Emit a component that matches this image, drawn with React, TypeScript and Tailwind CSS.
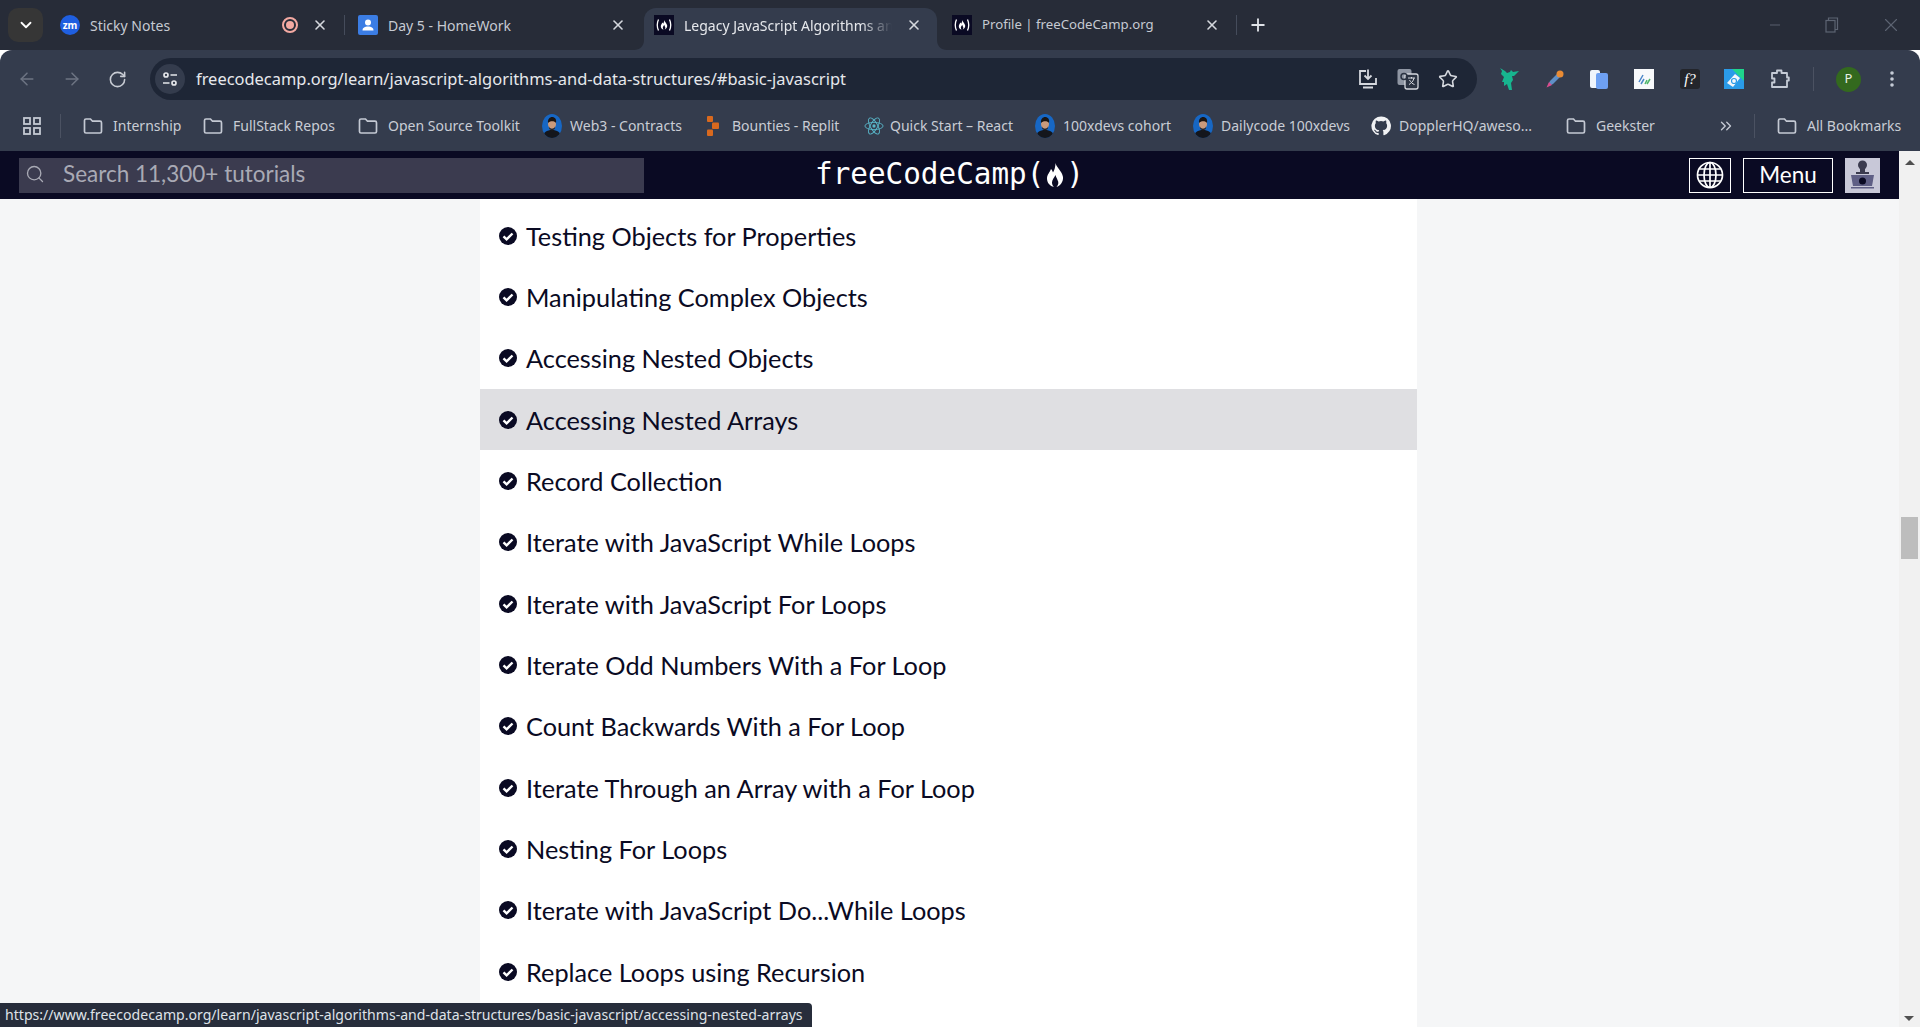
import { ArrowLeft, ArrowRight, ChevronDown, ChevronsRight, Minus, Plus, RotateCw, Search, Star, X } from 'lucide-react';
import type { ReactNode } from 'react';

const challenges = [
  'Testing Objects for Properties',
  'Manipulating Complex Objects',
  'Accessing Nested Objects',
  'Accessing Nested Arrays',
  'Record Collection',
  'Iterate with JavaScript While Loops',
  'Iterate with JavaScript For Loops',
  'Iterate Odd Numbers With a For Loop',
  'Count Backwards With a For Loop',
  'Iterate Through an Array with a For Loop',
  'Nesting For Loops',
  'Iterate with JavaScript Do...While Loops',
  'Replace Loops using Recursion',
];

const flamePath =
  'M9.500 0C10 4 16 8 17 14C17.500 19 14 23 10.500 24C12.500 22 13 19 11.500 17C11 15.500 10 14 9.500 12C8.500 14.500 6 16.500 6 19.500C6 21.500 7 23 8 24C4 23 1 20 1 15.500C1 11.500 4 9 5 6C6 7 6.500 8 7 9.500C8.500 7 9.500 3.500 9.500 0z';

function FccFavicon() {
  return (
    <svg viewBox="0 0 20 20" className="h-5 w-5 shrink-0">
      <rect width="20" height="20" fill="#0a0a23" />
      <path d="M4.500 4.500Q2 10 4.500 15.500M15.500 4.500Q18 10 15.500 15.500" stroke="#fff" strokeWidth="1.300" fill="none" />
      <g transform="translate(6.400 5) scale(0.4)">
        <path d={flamePath} fill="#fff" />
      </g>
    </svg>
  );
}

function FolderIcon() {
  return (
    <svg viewBox="0 0 20 18" className="h-[18px] w-5 shrink-0" fill="none" stroke="#c4c9d3" strokeWidth="1.700">
      <path d="M1.500 3.500a1.500 1.500 0 0 1 1.500-1.500h4.500l2 2.200H17a1.500 1.500 0 0 1 1.500 1.500v8.800a1.500 1.500 0 0 1-1.500 1.500H3a1.500 1.500 0 0 1-1.500-1.500z" />
    </svg>
  );
}

function PersonAvatar({ id }: { id: string }) {
  return (
    <svg viewBox="0 0 20 24" className="h-6 w-5 shrink-0">
      <defs>
        <clipPath id={id}>
          <ellipse cx="10" cy="12" rx="10" ry="12" />
        </clipPath>
      </defs>
      <g clipPath={`url(#${id})`}>
        <rect width="20" height="24" fill="#1767c4" />
        <path d="M1 24c0-6 4-8 9-8s9 2 9 8z" fill="#14161c" />
        <ellipse cx="10" cy="10" rx="4" ry="5" fill="#c99a7c" />
        <path d="M6 9c-.5-4 2-6 4-6s5 1.500 4 6c-1-2-6-2.500-8 0z" fill="#1b1512" />
        <path d="M7 12.500c1 3 5 3 6 0l-.3 2.500-2.700 1.500-2.700-1.500z" fill="#2b211c" />
      </g>
    </svg>
  );
}

function ReplitIcon() {
  return (
    <svg viewBox="0 0 12 20" className="h-5 w-3 shrink-0" fill="#d9691e">
      <rect x="0" y="0" width="6" height="6" rx="1" />
      <rect x="5" y="6.500" width="7" height="6.500" rx="1" />
      <rect x="0" y="13.500" width="6" height="6.500" rx="1" />
    </svg>
  );
}

function ReactIcon() {
  return (
    <svg viewBox="-11 -11 22 22" className="h-5 w-5 shrink-0" fill="none" stroke="#58b6c9" strokeWidth="1">
      <circle r="1.800" fill="#58b6c9" stroke="none" />
      <ellipse rx="10" ry="4" />
      <ellipse rx="10" ry="4" transform="rotate(60)" />
      <ellipse rx="10" ry="4" transform="rotate(120)" />
    </svg>
  );
}

function GithubIcon() {
  return (
    <svg viewBox="0 0 24 24" className="h-5 w-5 shrink-0" fill="#f1f2f4">
      <path d="M12 .5a11.500 11.500 0 0 0-3.640 22.410c.58.100.79-.25.790-.56v-2c-3.200.700-3.880-1.370-3.880-1.370-.53-1.340-1.280-1.700-1.280-1.700-1.050-.72.080-.7.080-.7 1.150.08 1.760 1.180 1.760 1.180 1.030 1.760 2.700 1.250 3.350.960.100-.750.400-1.250.730-1.540-2.550-.29-5.240-1.280-5.240-5.690 0-1.260.450-2.280 1.180-3.090-.120-.29-.510-1.460.110-3.050 0 0 .960-.310 3.160 1.180a10.900 10.900 0 0 1 5.760 0c2.200-1.490 3.160-1.180 3.160-1.180.620 1.590.230 2.760.110 3.050.740.810 1.180 1.830 1.180 3.090 0 4.420-2.690 5.390-5.260 5.680.410.360.780 1.060.780 2.140v3.170c0 .310.210.670.800.560A11.500 11.500 0 0 0 12 .5z" />
    </svg>
  );
}

function Bookmark({ icon, label, className }: { icon: ReactNode; label: string; className: string }) {
  return (
    <div className={`flex shrink-0 items-center whitespace-nowrap ${className}`}>
      {icon}
      <span>{label}</span>
    </div>
  );
}

function Tab({ icon, title, titleClass, className, active, divider, action }: { icon: ReactNode; title: string; titleClass?: string; className?: string; active?: boolean; divider?: boolean; action?: ReactNode }) {
  return (
    <div className={`relative flex h-[42px] w-[298px] shrink-0 items-center pb-2 pl-[10px] ${className ?? ''}`}>
      {active && (
        <>
          <div className="absolute top-0 bottom-0 left-0 w-[293px] rounded-t-[12px] bg-[#343c4d]" />
          <svg viewBox="0 0 10 10" className="absolute bottom-0 left-[-10px] h-[10px] w-[10px]">
            <path d="M10 0V10H0C6 10 10 6 10 0z" fill="#343c4d" />
          </svg>
          <svg viewBox="0 0 10 10" className="absolute bottom-0 left-[293px] h-[10px] w-[10px]">
            <path d="M0 0V10H10C4 10 0 6 0 0z" fill="#343c4d" />
          </svg>
        </>
      )}
      <div className="relative flex items-center">
        {icon}
        <span
          className={
            active
              ? 'ml-[10px] w-[208px] overflow-hidden whitespace-nowrap text-[#e6e8ec] [mask-image:linear-gradient(to_right,black_85%,transparent)]'
              : `ml-[10px] whitespace-nowrap text-[#c6cad2] ${titleClass ?? ''}`
          }
        >
          {title}
        </span>
      </div>
      {action}
      <X size={16} strokeWidth={2.4} className="absolute left-[262px] text-[#d5d8de]" />
      {divider && <div className="absolute left-[294px] h-5 w-px bg-[#454c5b]" />}
    </div>
  );
}

function ExtensionIcons() {
  return (
    <div className="ml-[22px] flex items-center">
      <svg viewBox="0 0 22 24" className="h-6 w-[22px]" fill="#17b58f">
        <path d="M1 1l5 3 2 2 3-1 1-2 2 2 6-1-5 5-2 0 1 4-2 3 1 7-3 0-2-6-3 2 0-4-2 0 2-5-3-3 1-3z" />
      </svg>
      <svg viewBox="0 0 20 20" className="ml-6 h-5 w-5">
        <path d="M12 5l3 3-7 7-4 2-1-1 2-4z" fill="#5f8fc7" />
        <path d="M1.500 18.500L4 13l3 3z" fill="#d94c8d" />
        <circle cx="15" cy="5" r="3.500" fill="#e98b34" />
      </svg>
      <svg viewBox="0 0 18 20" className="ml-[25px] h-5 w-[18px]">
        <rect x="0" y="1" width="10" height="18" rx="2" fill="#f0f4fb" />
        <rect x="6" y="4" width="12" height="16" rx="2" fill="#6ea0f2" />
      </svg>
      <svg viewBox="0 0 20 20" className="ml-[26px] h-5 w-5">
        <rect width="20" height="20" fill="#f7f9fb" />
        <path d="M5 13l4-7M7 15l3-5" stroke="#4a86c8" strokeWidth="1.500" />
        <path d="M11 15l2-4M13 15l3-5" stroke="#4db56a" strokeWidth="1.500" />
      </svg>
      <div className="ml-[26px] flex h-5 w-5 items-center justify-center rounded-[3px] bg-[#23252b] font-['Liberation_Serif',serif] text-[15px] italic text-white">
        f?
      </div>
      <svg viewBox="0 0 20 20" className="ml-[24px] h-5 w-5">
        <rect width="20" height="20" fill="#2a9be8" />
        <path d="M8 0H20V12z" fill="#1fd58c" />
        <path d="M3 14l8-9 5 4-7 9z" fill="#f4f7fa" />
        <circle cx="10" cy="12" r="2.500" fill="none" stroke="#2a9be8" strokeWidth="1.200" />
      </svg>
      <svg viewBox="0 0 20 20" className="ml-[26px] h-5 w-5" fill="none" stroke="#c5cbd6" strokeWidth="1.800" strokeLinejoin="round">
        <path d="M2 4h5V1.500h4.500V4H17v4.500h1.800v3H17V18H2v-4.500h2.500v-4H2z" />
      </svg>
      <div className="ml-[23px] h-6 w-px bg-[#4b5262]" />
      <div className="ml-[22px] flex h-[25px] w-[25px] items-center justify-center rounded-full bg-[#33691e] text-[13px] text-[#e8efe4]">P</div>
      <svg viewBox="0 0 4 18" className="ml-[29px] h-[18px] w-1" fill="#c5cbd6">
        <circle cx="2" cy="3" r="1.800" />
        <circle cx="2" cy="9" r="1.800" />
        <circle cx="2" cy="15" r="1.800" />
      </svg>
    </div>
  );
}

export default function App() {
  return (
    <div className="relative flex h-screen w-full flex-col overflow-hidden bg-white font-['Noto_Sans',sans-serif] text-[14px]">
      {/* tab strip */}
      <div className="flex h-[50px] shrink-0 items-end bg-[#272c38]">
        <div className="mb-[8px] ml-2 mr-[7px] flex h-[34px] w-[35px] shrink-0 items-center justify-center rounded-[10px] bg-[#363636] text-white">
          <ChevronDown size={18} strokeWidth={2.4} />
        </div>
        <Tab
          title="Sticky Notes"
          divider
          icon={
            <div className="flex h-5 w-5 shrink-0 items-center justify-center rounded-full bg-[#1f5fe0] text-[10px] font-bold leading-none text-white">zm</div>
          }
          action={
            <div className="absolute left-[232px] flex h-4 w-4 items-center justify-center rounded-full border-2 border-[#f3a9a2]">
              <div className="h-2 w-2 rounded-full bg-[#f3a9a2]" />
            </div>
          }
        />
        <Tab
          title="Day 5 - HomeWork"
          icon={
            <svg viewBox="0 0 20 20" className="h-5 w-5 shrink-0">
              <rect width="20" height="20" rx="2" fill="#3b7de4" />
              <circle cx="10" cy="7.500" r="3" fill="#fff" />
              <path d="M4.500 15.500c0-3 2.500-4 5.500-4s5.500 1 5.500 4z" fill="#fff" />
            </svg>
          }
        />
        <Tab title="Legacy JavaScript Algorithms and Data Structures" className="ml-[-2px]" active icon={<FccFavicon />} />
        <Tab title="Profile | freeCodeCamp.org" titleClass="text-[13.2px]" divider icon={<FccFavicon />} />
        <Plus size={20} strokeWidth={2.2} className="mb-[15px] ml-2 text-[#e0e3e8]" />
        <div className="mb-[14px] ml-auto flex items-center text-[#5d6472]">
          <Minus size={16} strokeWidth={1.4} />
          <svg viewBox="0 0 14 16" className="ml-[42px] h-4 w-[14px]" fill="none" stroke="currentColor" strokeWidth="1.200">
            <rect x="1" y="3.500" width="9" height="11.500" />
            <path d="M3.500 3.500V1h9v11.500H10" />
          </svg>
          <X size={22} strokeWidth={1.2} className="ml-[41px] mr-[18px]" />
        </div>
      </div>

      {/* toolbar */}
      <div className="flex h-[50px] shrink-0 items-end rounded-t-[12px] bg-[#343c4d]">
        <div className="flex h-[42px] w-full items-center">
          <ArrowLeft size={20} strokeWidth={1.8} className="ml-[17px] text-[#6d7483]" />
          <ArrowRight size={20} strokeWidth={1.8} className="ml-[25px] text-[#6d7483]" />
          <RotateCw size={19} strokeWidth={2} className="ml-[26px] text-[#c8ccd4]" />
          <div className="ml-[23px] flex h-[42px] w-[1327px] shrink-0 items-center rounded-full bg-[#1e2636] pl-[5px] pr-[19px]">
            <div className="flex h-[30px] w-[30px] shrink-0 items-center justify-center rounded-full bg-[#343c4d]">
              <svg viewBox="0 0 18 18" className="h-[18px] w-[18px]" fill="none" stroke="#e4e6ea" strokeWidth="1.700">
                <circle cx="5" cy="5" r="2" />
                <path d="M9.500 5H16M2 13h6.500" />
                <circle cx="13" cy="13" r="2" />
              </svg>
            </div>
            <span className="ml-[11px] text-[16.45px] text-[#e6e8ec]">freecodecamp.org/learn/javascript-algorithms-and-data-structures/#basic-javascript</span>
            <div className="ml-auto flex items-center text-[#d5d8de]">
              <svg viewBox="0 0 22 22" className="h-[22px] w-[22px]" fill="none" stroke="currentColor" strokeWidth="1.800">
                <path d="M9 3H3v13h16v-6M6 19.500h10M11 1.500v9M7.500 7.500l3.500 3.500 3.500-3.500" />
              </svg>
              <svg viewBox="0 0 22 22" className="ml-[18px] h-[22px] w-[22px]">
                <rect x="0.500" y="1" width="14" height="16" rx="2" fill="#8f96a3" />
                <rect x="8" y="6" width="13" height="15" rx="2" fill="#2b3342" stroke="#d5d8de" strokeWidth="1.300" />
                <path d="M11 10h7M14.500 9v1.500M17 10c-.5 3-3 5.500-5 6.500M12.500 12c1 2 3 4 5 4.500" stroke="#d5d8de" strokeWidth="1" fill="none" />
                <circle cx="7" cy="8.500" r="3" fill="none" stroke="#2b3342" strokeWidth="1.500" />
              </svg>
              <Star size={20} strokeWidth={1.9} className="ml-[19px]" />
            </div>
          </div>
          <ExtensionIcons />
        </div>
      </div>

      {/* bookmarks bar */}
      <div className="flex h-[51px] shrink-0 items-center bg-[#343c4d] text-[14px] text-[#c9cdd5]">
        <svg viewBox="0 0 18 18" className="ml-[23px] h-[18px] w-[18px]" fill="none" stroke="#c4c9d3" strokeWidth="1.800">
          <rect x="1" y="1" width="6" height="6" />
          <rect x="11" y="1" width="6" height="6" />
          <rect x="1" y="11" width="6" height="6" />
          <rect x="11" y="11" width="6" height="6" />
        </svg>
        <div className="ml-[19px] h-6 w-px bg-[#4b5262]" />
        <div className="ml-[22px] flex items-center">
          <Bookmark className="w-[120px] gap-[10px]" icon={<FolderIcon />} label="Internship" />
          <Bookmark className="w-[155px] gap-[10px]" icon={<FolderIcon />} label="FullStack Repos" />
          <Bookmark className="w-[184px] gap-[10px]" icon={<FolderIcon />} label="Open Source Toolkit" />
          <Bookmark className="w-[165px] gap-2" icon={<PersonAvatar id="avatar-web3" />} label="Web3 - Contracts" />
          <Bookmark className="w-[157px] gap-[13px]" icon={<ReplitIcon />} label="Bounties - Replit" />
          <Bookmark className="w-[171px] gap-[6px]" icon={<ReactIcon />} label="Quick Start – React" />
          <Bookmark className="w-[158px] gap-2" icon={<PersonAvatar id="avatar-cohort" />} label="100xdevs cohort" />
          <Bookmark className="w-[178px] gap-2" icon={<PersonAvatar id="avatar-daily" />} label="Dailycode 100xdevs" />
          <Bookmark className="w-[195px] gap-2" icon={<GithubIcon />} label="DopplerHQ/aweso..." />
          <Bookmark className="w-[151px] gap-[10px]" icon={<FolderIcon />} label="Geekster" />
        </div>
        <ChevronsRight size={18} strokeWidth={1.8} className="text-[#c4c9d3]" />
        <div className="ml-[19px] h-6 w-px bg-[#4b5262]" />
        <Bookmark className="ml-[22px] gap-[10px]" icon={<FolderIcon />} label="All Bookmarks" />
      </div>

      {/* page plus scrollbar */}
      <div className="flex min-h-0 flex-1">
        <div className="flex min-w-0 flex-1 flex-col">
          <nav className="flex h-12 shrink-0 items-center bg-[#0a0a23] font-['Lato',sans-serif] text-white">
            <div className="flex-1 pl-[19px]">
              <div className="flex h-[35px] w-[625px] items-center bg-[#3b3b4f] pb-[2px] pl-[6px] text-[#a9aab5]">
                <Search size={20} strokeWidth={1.6} />
                <span className="ml-[18px] text-[22.5px]">Search 11,300+ tutorials</span>
              </div>
            </div>
            <div className="flex items-center font-['DejaVu_Sans_Mono',monospace] text-[29.3px] leading-none">
              <span>freeCodeCamp(</span>
              <svg viewBox="0 0 18 24" className="mx-[2px] h-6 w-[18px]" fill="#fff">
                <path d={flamePath} />
              </svg>
              <span>)</span>
            </div>
            <div className="flex flex-1 items-center justify-end pr-[19px]">
              <div className="flex h-[35px] w-[42px] items-center justify-center border border-white">
                <svg viewBox="0 0 28 28" className="h-7 w-7" fill="none" stroke="#fff" strokeWidth="1.700">
                  <circle cx="14" cy="14" r="12.500" />
                  <ellipse cx="14" cy="14" rx="6" ry="12.500" />
                  <path d="M14 1.500v25M1.500 14h25M3.500 8h21M3.500 20h21" />
                </svg>
              </div>
              <div className="ml-3 flex h-[35px] w-[90px] items-center justify-center border border-white text-[22.5px]">Menu</div>
              <svg viewBox="0 0 35 35" className="ml-3 h-[35px] w-[35px]">
                <rect width="35" height="35" fill="#c8c8d8" />
                <circle cx="17.500" cy="7" r="4.500" fill="#3b3b4f" />
                <path d="M15 11h5v3h4v2H11v-2h4z" fill="#3b3b4f" />
                <path d="M6 17h23l-2 11H8z" fill="#5f5f85" />
                <rect x="6" y="29" width="23" height="1.500" fill="#5f5f85" />
                <circle cx="17.500" cy="23" r="3.500" fill="#0a0a23" />
              </svg>
            </div>
          </nav>
          <main className="flex min-h-0 flex-1 justify-center overflow-hidden bg-[#f5f6f7] pr-[2px]">
            <ul className="h-full w-[937px] bg-white pt-[6px] font-['Lato',sans-serif] text-[25.3px] text-[#0a0a23]">
              {challenges.map((name) => (
                <li key={name} className={name === 'Accessing Nested Arrays' ? 'flex h-[61.33px] items-center bg-[#dfdfe2] pl-[19px]' : 'flex h-[61.33px] items-center pl-[19px]'}>
                  <svg viewBox="0 0 18 18" className="h-[18px] w-[18px] shrink-0">
                    <circle cx="9" cy="9" r="9" fill="#0a0a23" />
                    <path d="M4.500 9.300l3.100 3.100 5.900-5.900" fill="none" stroke="#fff" strokeWidth="2.400" />
                  </svg>
                  <span className="ml-[9px] pt-[2px]">{name}</span>
                </li>
              ))}
            </ul>
          </main>
        </div>

        {/* scrollbar */}
        <div className="relative w-[21px] shrink-0 bg-[#f1f1f1]">
          <div className="absolute left-[6px] top-[9px] h-0 w-0 border-x-[5px] border-b-[5px] border-x-transparent border-b-[#505050]" />
          <div className="absolute left-[2px] top-[366px] h-[42px] w-[17px] bg-[#bdbdbd]" />
          <div className="absolute bottom-[6px] left-[5px] h-0 w-0 border-x-[5px] border-t-[5px] border-x-transparent border-t-[#505050]" />
        </div>
      </div>

      {/* link status bubble */}
      <div className="absolute bottom-0 left-0 flex h-6 w-[812px] items-center rounded-tr-[4px] bg-[#272d3b] pl-[5px] text-[14.1px] text-[#dfe2e8]">
        https://www.freecodecamp.org/learn/javascript-algorithms-and-data-structures/basic-javascript/accessing-nested-arrays
      </div>
    </div>
  );
}
